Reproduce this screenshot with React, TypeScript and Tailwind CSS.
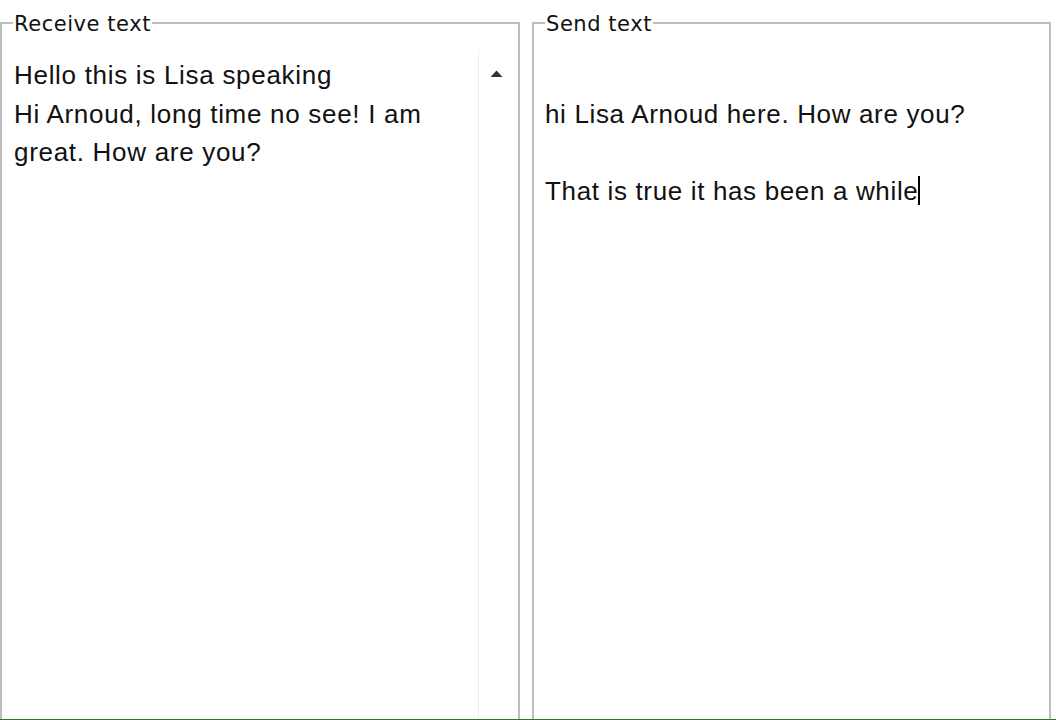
export default function App() {
  const body = { fontFamily: '"Liberation Sans", Arial, sans-serif' };
  const label = { fontFamily: '"DejaVu Sans", Verdana, sans-serif' };
  return (
    <div className="w-[1056px] h-[720px] bg-white overflow-hidden relative">
      <div className="flex gap-[12px] h-[760px]">
        <fieldset className="w-[520px] h-[760px] border-2 border-[#bdbdbd] m-0 p-0 mt-[9px] min-w-0">
          <legend
            className="ml-[11px] px-[1px] pt-[2px] text-[21px] leading-[26px] tracking-[0.55px] text-[#111]"
            style={label}
          >
            Receive text
          </legend>
          <div className="flex h-full">
            <div
              className="flex-1 pl-[12px] pt-[19px] text-[26px] leading-[38.5px] tracking-[0.7px] text-[#111]"
              style={body}
            >
              <div>Hello this is Lisa speaking</div>
              <div>Hi Arnoud, long time no see! I am</div>
              <div>great. How are you?</div>
            </div>
            <div className="w-[40px] mt-[13px] border-l border-[#eeeeee] flex pl-[11px] pt-[20px]">
              <svg width="13" height="8" viewBox="0 0 13 8">
                <path d="M6.5 0.5 L12.5 7 L0.5 7 Z" fill="#333" />
              </svg>
            </div>
          </div>
        </fieldset>
        <fieldset className="w-[519px] h-[760px] border-2 border-[#bdbdbd] m-0 p-0 mt-[9px] min-w-0">
          <legend
            className="ml-[11px] px-[1px] pt-[2px] text-[21px] leading-[26px] tracking-[0.55px] text-[#111]"
            style={label}
          >
            Send text
          </legend>
          <div
            className="pl-[11px] pt-[19px] text-[26px] leading-[38.5px] tracking-[0.65px] text-[#111]"
            style={body}
          >
            <div>&nbsp;</div>
            <div>hi Lisa Arnoud here. How are you?</div>
            <div>&nbsp;</div>
            <div className="flex items-center">
              That is true it has been a while
              <span className="inline-block w-[2px] h-[29px] bg-black" />
            </div>
          </div>
        </fieldset>
      </div>
      <div className="absolute left-0 right-0 bottom-0 h-[1px] bg-[#2f7a2f]" />
    </div>
  );
}
